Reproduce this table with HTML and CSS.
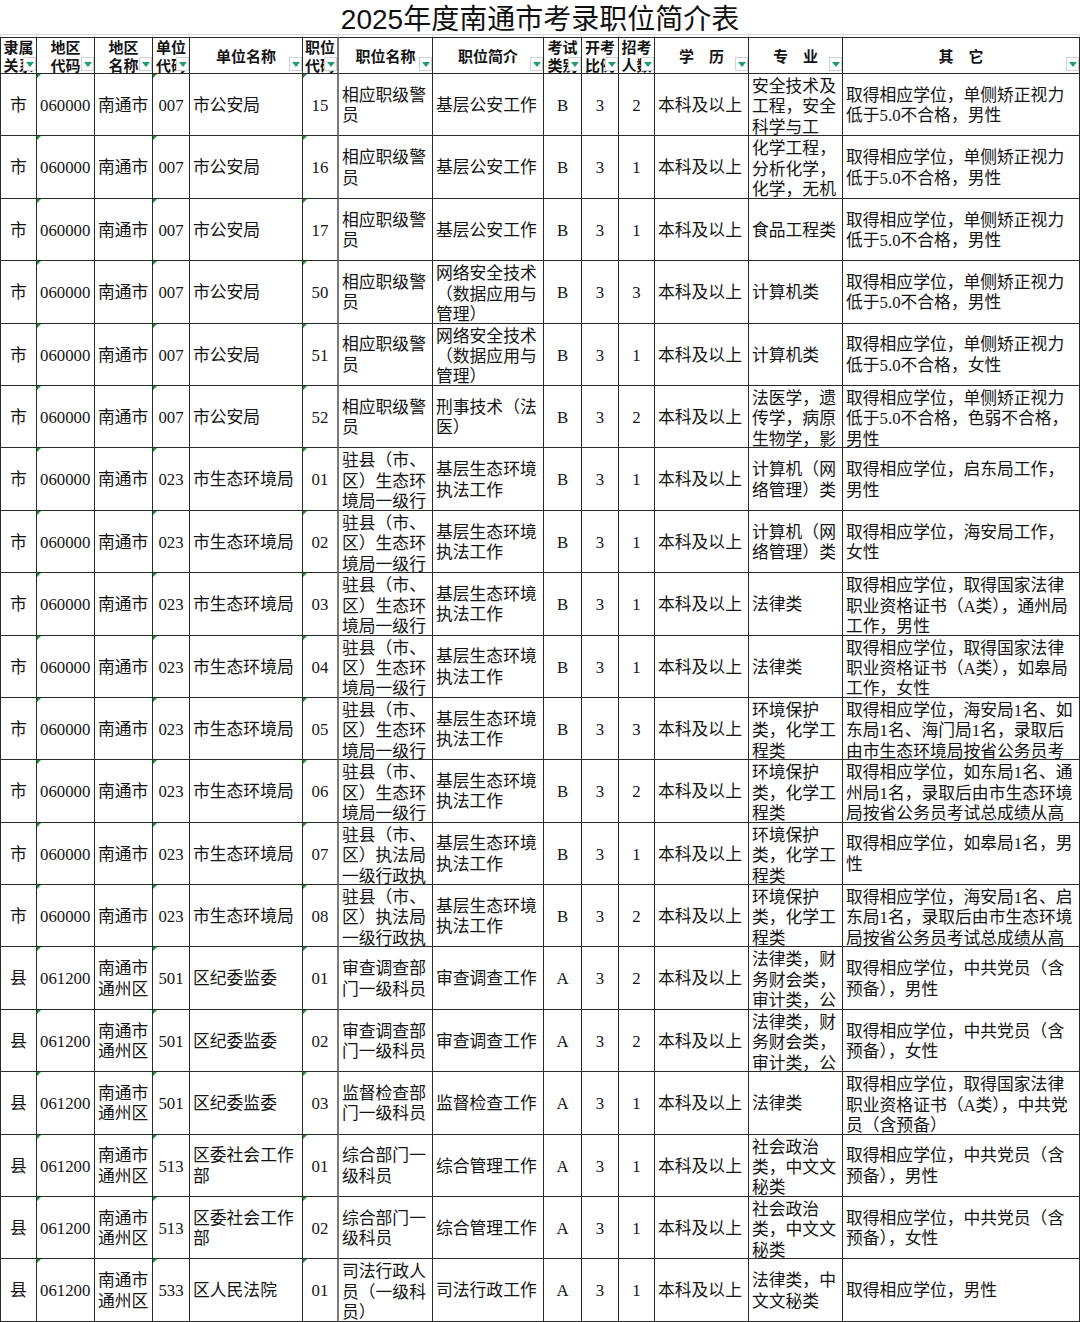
FILE: index.html
```html
<!DOCTYPE html>
<html lang="zh-CN">
<head>
<meta charset="utf-8">
<title>2025年度南通市考录职位简介表</title>
<link rel="stylesheet" href="styles.css">
</head>
<body>
<div class="title">2025年度南通市考录职位简介表</div>
<div class="sheet">
  <div class="r gap"><div></div><div></div><div></div><div></div><div></div><div></div><div></div><div></div><div></div><div></div><div></div><div></div><div></div><div></div></div>
  <div class="r head">
    <div><span class="w2">隶属关系</span><i class="fb"></i></div>
    <div><span class="w2">地区代码</span><i class="fb"></i></div>
    <div><span class="w2">地区名称</span><i class="fb"></i></div>
    <div><span class="w2">单位代码</span><i class="fb"></i></div>
    <div><span>单位名称</span><i class="fb"></i></div>
    <div><span class="w2">职位代码</span><i class="fb"></i></div>
    <div><span>职位名称</span><i class="fb"></i></div>
    <div><span>职位简介</span><i class="fb"></i></div>
    <div><span class="w2">考试类别</span><i class="fb"></i></div>
    <div><span class="w2">开考比例</span><i class="fb"></i></div>
    <div><span class="w2">招考人数</span><i class="fb"></i></div>
    <div><span>学　历</span><i class="fb"></i></div>
    <div><span>专　业</span><i class="fb"></i></div>
    <div><span>其　它</span><i class="fb"></i></div>
  </div>

  <div class="r data"><div><span>市</span></div><div><span>060000</span></div><div><span>南通市</span></div><div><span>007</span></div><div><span>市公安局</span></div><div><span>15</span></div><div><span>相应职级警员</span></div><div><span>基层公安工作</span></div><div><span>B</span></div><div><span>3</span></div><div><span>2</span></div><div><span>本科及以上</span></div><div><span>安全技术及工程，安全科学与工</span></div><div><span>取得相应学位，单侧矫正视力低于5.0不合格，男性</span></div></div>

  <div class="r data"><div><span>市</span></div><div><span>060000</span></div><div><span>南通市</span></div><div><span>007</span></div><div><span>市公安局</span></div><div><span>16</span></div><div><span>相应职级警员</span></div><div><span>基层公安工作</span></div><div><span>B</span></div><div><span>3</span></div><div><span>1</span></div><div><span>本科及以上</span></div><div><span>化学工程，分析化学，化学，无机</span></div><div><span>取得相应学位，单侧矫正视力低于5.0不合格，男性</span></div></div>

  <div class="r data"><div><span>市</span></div><div><span>060000</span></div><div><span>南通市</span></div><div><span>007</span></div><div><span>市公安局</span></div><div><span>17</span></div><div><span>相应职级警员</span></div><div><span>基层公安工作</span></div><div><span>B</span></div><div><span>3</span></div><div><span>1</span></div><div><span>本科及以上</span></div><div><span>食品工程类</span></div><div><span>取得相应学位，单侧矫正视力低于5.0不合格，男性</span></div></div>

  <div class="r data"><div><span>市</span></div><div><span>060000</span></div><div><span>南通市</span></div><div><span>007</span></div><div><span>市公安局</span></div><div><span>50</span></div><div><span>相应职级警员</span></div><div><span>网络安全技术（数据应用与管理）</span></div><div><span>B</span></div><div><span>3</span></div><div><span>3</span></div><div><span>本科及以上</span></div><div><span>计算机类</span></div><div><span>取得相应学位，单侧矫正视力低于5.0不合格，男性</span></div></div>

  <div class="r data"><div><span>市</span></div><div><span>060000</span></div><div><span>南通市</span></div><div><span>007</span></div><div><span>市公安局</span></div><div><span>51</span></div><div><span>相应职级警员</span></div><div><span>网络安全技术（数据应用与管理）</span></div><div><span>B</span></div><div><span>3</span></div><div><span>1</span></div><div><span>本科及以上</span></div><div><span>计算机类</span></div><div><span>取得相应学位，单侧矫正视力低于5.0不合格，女性</span></div></div>

  <div class="r data"><div><span>市</span></div><div><span>060000</span></div><div><span>南通市</span></div><div><span>007</span></div><div><span>市公安局</span></div><div><span>52</span></div><div><span>相应职级警员</span></div><div><span>刑事技术（法医）</span></div><div><span>B</span></div><div><span>3</span></div><div><span>2</span></div><div><span>本科及以上</span></div><div><span>法医学，遗传学，病原生物学，影</span></div><div><span>取得相应学位，单侧矫正视力低于5.0不合格，色弱不合格，男性</span></div></div>

  <div class="r data"><div><span>市</span></div><div><span>060000</span></div><div><span>南通市</span></div><div><span>023</span></div><div><span>市生态环境局</span></div><div><span>01</span></div><div><span>驻县（市、区）生态环境局一级行</span></div><div><span>基层生态环境执法工作</span></div><div><span>B</span></div><div><span>3</span></div><div><span>1</span></div><div><span>本科及以上</span></div><div><span>计算机（网络管理）类</span></div><div><span>取得相应学位，启东局工作，男性</span></div></div>

  <div class="r data"><div><span>市</span></div><div><span>060000</span></div><div><span>南通市</span></div><div><span>023</span></div><div><span>市生态环境局</span></div><div><span>02</span></div><div><span>驻县（市、区）生态环境局一级行</span></div><div><span>基层生态环境执法工作</span></div><div><span>B</span></div><div><span>3</span></div><div><span>1</span></div><div><span>本科及以上</span></div><div><span>计算机（网络管理）类</span></div><div><span>取得相应学位，海安局工作，女性</span></div></div>

  <div class="r data"><div><span>市</span></div><div><span>060000</span></div><div><span>南通市</span></div><div><span>023</span></div><div><span>市生态环境局</span></div><div><span>03</span></div><div><span>驻县（市、区）生态环境局一级行</span></div><div><span>基层生态环境执法工作</span></div><div><span>B</span></div><div><span>3</span></div><div><span>1</span></div><div><span>本科及以上</span></div><div><span>法律类</span></div><div><span>取得相应学位，取得国家法律职业资格证书（A类），通州局工作，男性</span></div></div>

  <div class="r data"><div><span>市</span></div><div><span>060000</span></div><div><span>南通市</span></div><div><span>023</span></div><div><span>市生态环境局</span></div><div><span>04</span></div><div><span>驻县（市、区）生态环境局一级行</span></div><div><span>基层生态环境执法工作</span></div><div><span>B</span></div><div><span>3</span></div><div><span>1</span></div><div><span>本科及以上</span></div><div><span>法律类</span></div><div><span>取得相应学位，取得国家法律职业资格证书（A类），如皋局工作，女性</span></div></div>

  <div class="r data"><div><span>市</span></div><div><span>060000</span></div><div><span>南通市</span></div><div><span>023</span></div><div><span>市生态环境局</span></div><div><span>05</span></div><div><span>驻县（市、区）生态环境局一级行</span></div><div><span>基层生态环境执法工作</span></div><div><span>B</span></div><div><span>3</span></div><div><span>3</span></div><div><span>本科及以上</span></div><div><span>环境保护类，化学工程类</span></div><div><span>取得相应学位，海安局1名、如东局1名、海门局1名，录取后由市生态环境局按省公务员考</span></div></div>

  <div class="r data"><div><span>市</span></div><div><span>060000</span></div><div><span>南通市</span></div><div><span>023</span></div><div><span>市生态环境局</span></div><div><span>06</span></div><div><span>驻县（市、区）生态环境局一级行</span></div><div><span>基层生态环境执法工作</span></div><div><span>B</span></div><div><span>3</span></div><div><span>2</span></div><div><span>本科及以上</span></div><div><span>环境保护类，化学工程类</span></div><div><span>取得相应学位，如东局1名、通州局1名，录取后由市生态环境局按省公务员考试总成绩从高</span></div></div>

  <div class="r data"><div><span>市</span></div><div><span>060000</span></div><div><span>南通市</span></div><div><span>023</span></div><div><span>市生态环境局</span></div><div><span>07</span></div><div><span>驻县（市、区）执法局一级行政执</span></div><div><span>基层生态环境执法工作</span></div><div><span>B</span></div><div><span>3</span></div><div><span>1</span></div><div><span>本科及以上</span></div><div><span>环境保护类，化学工程类</span></div><div><span>取得相应学位，如皋局1名，男性</span></div></div>

  <div class="r data"><div><span>市</span></div><div><span>060000</span></div><div><span>南通市</span></div><div><span>023</span></div><div><span>市生态环境局</span></div><div><span>08</span></div><div><span>驻县（市、区）执法局一级行政执</span></div><div><span>基层生态环境执法工作</span></div><div><span>B</span></div><div><span>3</span></div><div><span>2</span></div><div><span>本科及以上</span></div><div><span>环境保护类，化学工程类</span></div><div><span>取得相应学位，海安局1名、启东局1名，录取后由市生态环境局按省公务员考试总成绩从高</span></div></div>

  <div class="r data"><div><span>县</span></div><div><span>061200</span></div><div><span>南通市通州区</span></div><div><span>501</span></div><div><span>区纪委监委</span></div><div><span>01</span></div><div><span>审查调查部门一级科员</span></div><div><span>审查调查工作</span></div><div><span>A</span></div><div><span>3</span></div><div><span>2</span></div><div><span>本科及以上</span></div><div><span>法律类，财务财会类，审计类，公</span></div><div><span>取得相应学位，中共党员（含预备），男性</span></div></div>

  <div class="r data"><div><span>县</span></div><div><span>061200</span></div><div><span>南通市通州区</span></div><div><span>501</span></div><div><span>区纪委监委</span></div><div><span>02</span></div><div><span>审查调查部门一级科员</span></div><div><span>审查调查工作</span></div><div><span>A</span></div><div><span>3</span></div><div><span>2</span></div><div><span>本科及以上</span></div><div><span>法律类，财务财会类，审计类，公</span></div><div><span>取得相应学位，中共党员（含预备），女性</span></div></div>

  <div class="r data"><div><span>县</span></div><div><span>061200</span></div><div><span>南通市通州区</span></div><div><span>501</span></div><div><span>区纪委监委</span></div><div><span>03</span></div><div><span>监督检查部门一级科员</span></div><div><span>监督检查工作</span></div><div><span>A</span></div><div><span>3</span></div><div><span>1</span></div><div><span>本科及以上</span></div><div><span>法律类</span></div><div><span>取得相应学位，取得国家法律职业资格证书（A类），中共党员（含预备）</span></div></div>

  <div class="r data"><div><span>县</span></div><div><span>061200</span></div><div><span>南通市通州区</span></div><div><span>513</span></div><div><span>区委社会工作部</span></div><div><span>01</span></div><div><span>综合部门一级科员</span></div><div><span>综合管理工作</span></div><div><span>A</span></div><div><span>3</span></div><div><span>1</span></div><div><span>本科及以上</span></div><div><span>社会政治类，中文文秘类</span></div><div><span>取得相应学位，中共党员（含预备），男性</span></div></div>

  <div class="r data"><div><span>县</span></div><div><span>061200</span></div><div><span>南通市通州区</span></div><div><span>513</span></div><div><span>区委社会工作部</span></div><div><span>02</span></div><div><span>综合部门一级科员</span></div><div><span>综合管理工作</span></div><div><span>A</span></div><div><span>3</span></div><div><span>1</span></div><div><span>本科及以上</span></div><div><span>社会政治类，中文文秘类</span></div><div><span>取得相应学位，中共党员（含预备），女性</span></div></div>

  <div class="r data"><div><span>县</span></div><div><span>061200</span></div><div><span>南通市通州区</span></div><div><span>533</span></div><div><span>区人民法院</span></div><div><span>01</span></div><div><span>司法行政人员（一级科员）</span></div><div><span>司法行政工作</span></div><div><span>A</span></div><div><span>3</span></div><div><span>1</span></div><div><span>本科及以上</span></div><div><span>法律类，中文文秘类</span></div><div><span>取得相应学位，男性</span></div></div>
</div>
</body>
</html>
```

FILE: styles.css
```css
* { box-sizing: border-box; }

html, body {
  margin: 0;
  background: #ffffff;
}

body {
  color: #141414;
  font-family: "Liberation Serif", "Noto Sans CJK SC", serif;
  width: 1080px;
  overflow: hidden;
}

.title {
  height: 35px;
  border-bottom: 1px solid #dadada;
  text-align: center;
  font-family: "Liberation Sans", "Noto Sans CJK SC", sans-serif;
  font-size: 28px;
  line-height: 39px;
  color: #111;
  overflow: hidden;
  white-space: nowrap;
}

.sheet {
  display: grid;
  grid-template-columns: 37px 58px 58px 37px 113px 36px 94px 111px 38px 37px 36px 94px 94px 237px;
  grid-template-rows: 2px 37px repeat(20, 62.4px);
}

.r { display: contents; }

/* faint gridline strip above the header */
.gap > div { border-right: 1px solid #d6d6d6; }
.gap > div:first-child { border-left: 1px solid #d6d6d6; }

/* header */
.head > div {
  position: relative;
  display: flex;
  align-items: center;
  justify-content: center;
  text-align: center;
  border-top: 1px solid #2a2a2a;
  border-right: 1px solid #2a2a2a;
  border-bottom: 1px solid #2a2a2a;
  font-family: "Noto Sans CJK SC", sans-serif;
  font-weight: 700;
  font-size: 15px;
  line-height: 18px;
  color: #151515;
  overflow: hidden;
  padding-top: 1px;
}
.head > div:first-child { border-left: 1px solid #2a2a2a; }
.head > div:nth-child(6) { border-right: 2px solid #7a7a7a; }

.head .w2 {
  display: block;
  width: 30px;
  flex: none;
}

.fb {
  position: absolute;
  right: 0;
  bottom: 2px;
  width: 13px;
  height: 14px;
  background: #ffffff;
  border: 1px solid #d2d2d2;
}
.fb::after {
  content: "";
  position: absolute;
  left: 2px;
  top: 4px;
  border-left: 4px solid transparent;
  border-right: 4px solid transparent;
  border-top: 5px solid #1f9d70;
}

/* data cells */
.data > div {
  position: relative;
  display: flex;
  border-right: 1px solid #2a2a2a;
  border-bottom: 1px solid #2a2a2a;
  padding: 3px 0 0 3px;
  font-size: 16.8px;
  line-height: 20.4px;
  overflow: hidden;
}
.data > div > span {
  margin: auto 0;
}
.data > div:first-child { border-left: 1px solid #2a2a2a; }
.data > div:nth-child(6) { border-right: 2px solid #7a7a7a; }

.data > div:nth-child(1),
.data > div:nth-child(4),
.data > div:nth-child(6),
.data > div:nth-child(9),
.data > div:nth-child(10),
.data > div:nth-child(11) {
  justify-content: center;
  padding-left: 0;
}

/* green "number stored as text" markers */
.data > div:nth-child(2)::before,
.data > div:nth-child(4)::before,
.data > div:nth-child(6)::before {
  content: "";
  position: absolute;
  left: 0;
  top: 0;
  border-top: 4px solid #1d8f2c;
  border-right: 4px solid transparent;
}
```
